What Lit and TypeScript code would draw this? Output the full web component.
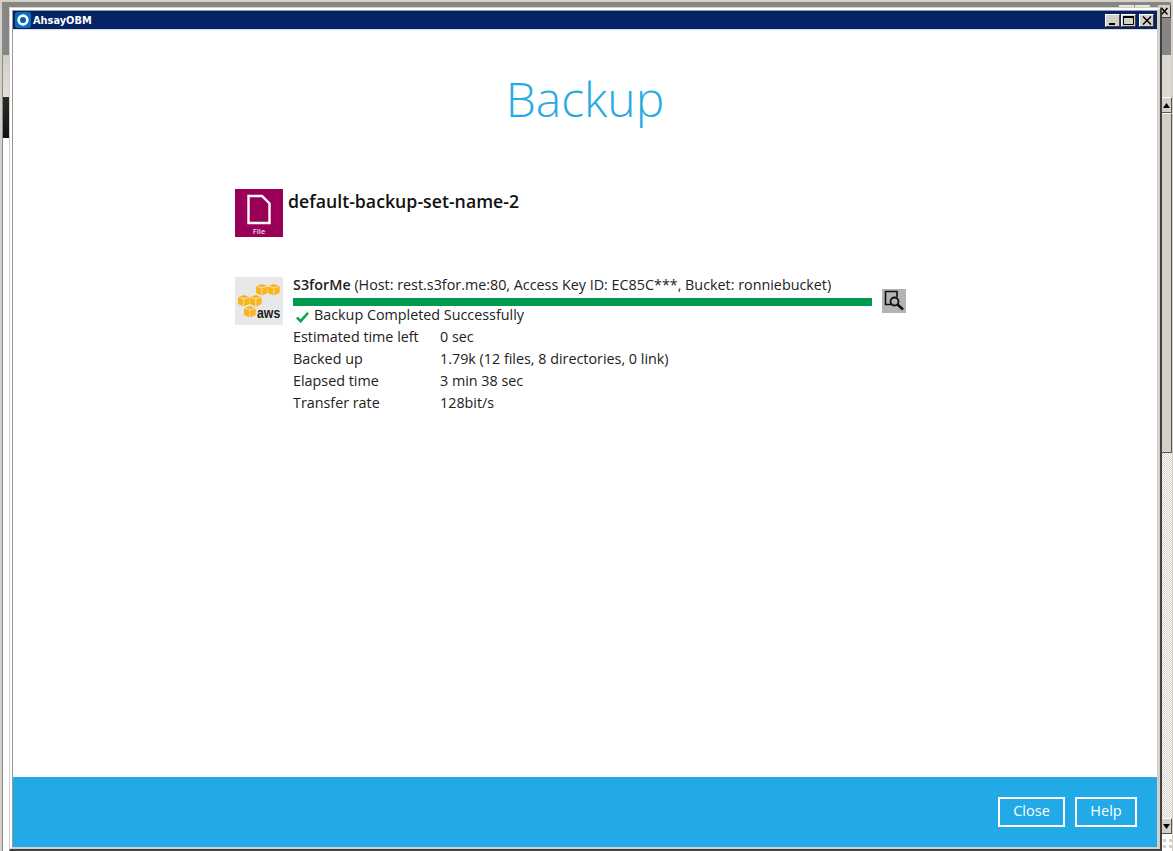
import { LitElement, html, svg, css } from "lit";
import { customElement } from "lit/decorators.js";

const STATS: [string, string][] = [
  ["Estimated time left", "0 sec"],
  ["Backed up", "1.79k (12 files, 8 directories, 0 link)"],
  ["Elapsed time", "3 min 38 sec"],
  ["Transfer rate", "128bit/s"],
];

const cube = (x: number, y: number) => svg`
  <g transform="translate(${x} ${y})">
    <path d="M0 2 L5.8 0 L11.6 2 L11.6 9 L5.8 11.6 L0 9 Z" fill="#fbb416" />
    <path d="M5.8 3.8 L5.8 11.6 M0 2 L5.8 3.8 L11.6 2" fill="none" stroke="#e8e8e8" stroke-width=".9" />
  </g>`;

@customElement("app-root")
export class AppRoot extends LitElement {
  static styles = css`
    :host {
      display: block;
      position: relative;
      width: 1173px;
      height: 851px;
      overflow: hidden;
      background: #d4d0c8;
      font-family: "Open Sans", "Noto Sans", sans-serif;
      color: #222;
    }
    .bg-top { position: absolute; left: 3px; top: 2px; right: 2px; height: 53px; background: #868686; }
    .bg-left-edge { position: absolute; left: 2px; top: 2px; width: 1px; bottom: 0; background: #8a8a8a; }
    .bg-left-pane { position: absolute; left: 3px; top: 55px; width: 6px; bottom: 0; background: #fff; }
    .bg-left-light { position: absolute; left: 3px; top: 55px; width: 6px; height: 42px; background: linear-gradient(#d0ccc6, #e4e0da); }
    .bg-left-dark { position: absolute; left: 3px; top: 97px; width: 6px; height: 41px; background: linear-gradient(#2a2a2a, #111); }
    .bg-right-light { position: absolute; left: 1161px; top: 55px; width: 10px; height: 42px; background: #dcd8d2; }
    .bg-tab { position: absolute; top: 5px; height: 2px; width: 15px; background: #e8e6e0; }
    .bg-tab.a { left: 1119px; }
    .bg-tab.b { left: 1135px; }
    .bg-close {
      position: absolute; left: 1158px; top: 5px; width: 13px; height: 13px;
      box-sizing: border-box; background: #d4d0c8; border-right: 1px solid #444; border-bottom: 1px solid #444;
      display: flex; align-items: center; justify-content: center;
    }
    .bg-scroll { position: absolute; left: 1161px; top: 97px; width: 11px; height: 754px; display: flex; flex-direction: column; background: #fff; }
    .bg-btn {
      box-sizing: border-box; height: 16px; flex: none; background: #d4d0c8;
      border-top: 1px solid #fff; border-right: 1px solid #555; border-bottom: 1px solid #555;
      display: flex; align-items: center; justify-content: center;
    }
    .bg-thumb { box-sizing: border-box; height: 340px; flex: none; background: #d4d0c8; border-top: 1px solid #fff; border-right: 1px solid #555; border-bottom: 1px solid #555; }
    .bg-track {
      height: 365px; flex: none;
      background-color: #fff;
      background-image: linear-gradient(45deg, #d4d0c8 25%, transparent 25%, transparent 75%, #d4d0c8 75%), linear-gradient(45deg, #d4d0c8 25%, transparent 25%, transparent 75%, #d4d0c8 75%);
      background-size: 2px 2px;
      background-position: 0 0, 1px 1px;
    }
    .bg-grip { flex: 1; display: grid; grid-template-columns: repeat(2, 3px); gap: 3px; padding: 5px 2px; align-content: start; }
    .bg-grip i { width: 3px; height: 3px; background: #d4d0c8; }

    .window {
      position: absolute; left: 9px; top: 7px; width: 1153px; height: 844px;
      box-sizing: border-box; background: #d4d0c8;
      border-left: 1px solid #d4d0c8; border-top: 1px solid #d4d0c8;
      border-right: 2px solid #404040; border-bottom: 2px solid #404040;
      display: flex;
    }
    .frame {
      flex: 1; min-width: 0; box-sizing: border-box;
      border-left: 2px solid #fff; border-top: 2px solid #fff;
      border-right: 3px solid #d4d0c8; border-bottom: 2px solid #d4d0c8;
      display: flex;
    }
    .client {
      flex: 1; min-width: 0; box-sizing: border-box;
      border-left: 1px solid #999; border-top: 1px solid #999;
      background: #fff; display: flex; flex-direction: column;
    }
    .titlebar {
      height: 18px; flex: none; background: #062366; color: #fff;
      display: flex; align-items: center; padding: 0 3px 0 2px;
      border-bottom: 1px solid #dcdcdc;
    }
    .tb-icon { width: 16px; height: 16px; flex: none; display: block; }
    .tb-text { font: 700 9.8px "DejaVu Sans", sans-serif; margin-left: 2px; flex: 1; }
    .tb-btn {
      width: 15px; height: 13px; box-sizing: border-box; background: #d4d0c8;
      border: 1px solid; border-color: #fff #404040 #404040 #fff;
      display: flex; align-items: center; justify-content: center; flex: none; margin-left: 1px;
    }
    .tb-btn.close { margin-left: 3px; }
    .body { flex: 1; min-height: 0; display: flex; flex-direction: column; }
    h1 {
      margin: 36px 0 0; height: 68px; text-align: center;
      font-size: 48px; line-height: 66px; font-weight: 300; color: #29abe2;
    }
    .content { padding: 55px 0 0 222px; display: flex; flex-direction: column; }
    .set { display: flex; gap: 5px; height: 48px; }
    .set-icon { width: 48px; height: 48px; flex: none; display: block; }
    .set-name { font-size: 17.73px; line-height: 24px; font-weight: 600; color: #111; }
    .dest { display: flex; margin-top: 40px; }
    .aws { width: 48px; height: 48px; flex: none; display: block; margin-right: 10px; }
    .info { width: 579px; flex: none; font-size: 14.33px; line-height: 22px; }
    .info-head { height: 17px; line-height: 15px; white-space: nowrap; }
    .info-head b { font-weight: 600; }
    .bar { height: 8px; background: #009a4e; margin-top: 4px; }
    .status { display: flex; align-items: center; height: 18px; padding: 0 0 2px 3px; gap: 5px; }
    .check { width: 13px; height: 12px; display: block; margin-top: 3px; flex: none; }
    .stats { display: grid; grid-template-columns: 147px 1fr; grid-auto-rows: 22px; }
    .find {
      width: 24px; height: 24px; flex: none; background: #b3b3b3; border: 0; padding: 0;
      margin: 12px 0 0 10px; display: block;
    }
    .find svg { display: block; }
    footer {
      height: 70px; flex: none; background: #22aae8; display: flex;
      justify-content: flex-end; align-items: center; gap: 10px; padding-right: 20px;
    }
    footer button {
      height: 30px; box-sizing: border-box; border: 2px solid #fff; background: transparent;
      color: #fff; font: 14.5px/22px "Open Sans", sans-serif; padding: 0 0 2px;
    }
    .b-close { width: 67px; }
    .b-help { width: 62px; }
  `;

  render() {
    return html`
      <div class="bg-top"></div>
      <div class="bg-left-edge"></div>
      <div class="bg-left-pane"></div>
      <div class="bg-left-light"></div>
      <div class="bg-left-dark"></div>
      <div class="bg-right-light"></div>
      <div class="bg-tab a"></div>
      <div class="bg-tab b"></div>
      <div class="bg-close">
        <svg width="9" height="9" viewBox="0 0 9 9"><path d="M1.5 1 L7.5 7.5 M7.5 1 L1.5 7.5" stroke="#000" stroke-width="1.4" /></svg>
      </div>
      <div class="bg-scroll">
        <div class="bg-btn"><svg width="7" height="5" viewBox="0 0 7 5"><path d="M3.5 0 L7 5 L0 5 Z" fill="#000" /></svg></div>
        <div class="bg-thumb"></div>
        <div class="bg-track"></div>
        <div class="bg-btn"><svg width="7" height="5" viewBox="0 0 7 5"><path d="M0 0 L7 0 L3.5 5 Z" fill="#000" /></svg></div>
        <div class="bg-grip"><i></i><i></i><i></i><i></i></div>
      </div>

      <div class="window">
        <div class="frame">
          <div class="client">
            <div class="titlebar">
              <svg class="tb-icon" viewBox="0 0 16 16">
                <rect width="16" height="16" rx="3" fill="#0b6cc0" />
                <circle cx="8" cy="8" r="4.4" fill="none" stroke="#fff" stroke-width="2.6" />
                <circle cx="8" cy="8" r="2.2" fill="#0a5aa8" />
              </svg>
              <span class="tb-text">AhsayOBM</span>
              <span class="tb-btn"><svg width="9" height="9" viewBox="0 0 9 9"><rect x="1" y="7" width="6" height="2" fill="#000" /></svg></span>
              <span class="tb-btn"><svg width="11" height="9" viewBox="0 0 11 9"><path d="M.5 1.5 H10.5 V8.5 H.5 Z" fill="none" stroke="#000" /><rect width="11" height="2" fill="#000" /></svg></span>
              <span class="tb-btn close"><svg width="10" height="9" viewBox="0 0 10 9"><path d="M1 .5 L9 8.5 M9 .5 L1 8.5" stroke="#000" stroke-width="1.5" /></svg></span>
            </div>
            <div class="body">
              <h1>Backup</h1>
              <div class="content">
                <div class="set">
                  <svg class="set-icon" viewBox="0 0 48 48">
                    <rect width="48" height="48" fill="#9b0058" />
                    <path d="M13.5 7 H27 L34.5 14.5 V34 H13.5 Z" fill="none" stroke="#fff" stroke-width="2.4" />
                    <text x="24" y="45" text-anchor="middle" font-family="Open Sans" font-size="7.5" font-weight="600" fill="#f4dbe8">File</text>
                  </svg>
                  <div class="set-name">default-backup-set-name-2</div>
                </div>
                <div class="dest">
                  <svg class="aws" viewBox="0 0 48 48">
                    <rect width="48" height="48" fill="#e8e8e8" />
                    ${cube(21, 7)}${cube(33, 7)}${cube(3, 18)}${cube(15, 18)}${cube(9, 29)}
                    <text transform="translate(22 41) scale(.82 1)" font-family="Liberation Sans" font-size="15" font-weight="700" fill="#1a1a1a">aws</text>
                  </svg>
                  <div class="info">
                    <div class="info-head"><b>S3forMe</b> (Host: rest.s3for.me:80, Access Key ID: EC85C***, Bucket: ronniebucket)</div>
                    <div class="bar"></div>
                    <div class="status">
                      <svg class="check" viewBox="0 0 14 12"><path d="M1 6.5 L5 10.5 L13 1.5" fill="none" stroke="#10a64e" stroke-width="2.8" /></svg>
                      <span>Backup Completed Successfully</span>
                    </div>
                    <div class="stats">
                      ${STATS.map(([k, v]) => html`<span>${k}</span><span>${v}</span>`)}
                    </div>
                  </div>
                  <button class="find" aria-label="View log">
                    <svg width="24" height="24" viewBox="0 0 24 24">
                      <path d="M11 15.5 H3.5 V2.5 H15 V8" fill="none" stroke="#111" stroke-width="1.6" />
                      <circle cx="12.5" cy="12.5" r="4" fill="none" stroke="#111" stroke-width="1.8" />
                      <path d="M15.5 15.5 L21 20.5" stroke="#111" stroke-width="2.6" />
                    </svg>
                  </button>
                </div>
              </div>
            </div>
            <footer>
              <button class="b-close">Close</button>
              <button class="b-help">Help</button>
            </footer>
          </div>
        </div>
      </div>
    `;
  }
}
